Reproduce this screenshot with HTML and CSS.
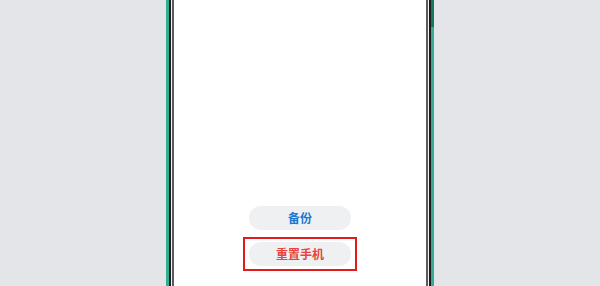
FILE: index.html
```html
<!DOCTYPE html>
<html>
<head>
<meta charset="utf-8">
<link rel="stylesheet" href="styles.css">
</head>
<body>
<div class="phone">
  <div class="bezel">
    <div class="rim">
      <div class="screen">
        <div class="actions">
          <div class="btn btn-blue">备份</div>
          <div class="mark">
            <div class="btn btn-red">重置手机</div>
          </div>
        </div>
      </div>
    </div>
  </div>
</div>
</body>
</html>
```

FILE: styles.css
```css
* {
    margin:0px;
    padding:0px;
    box-sizing:border-box;
}
html, body {
    height:100%;
}
body {
    background:#e4e5e9;
    font-family:"Noto Sans CJK SC", "Noto Sans", sans-serif;
    overflow:hidden;
}
.phone {
    position:relative;
    width:268px;
    height:100%;
    margin:0 auto;
    border-left:3px solid #2fae92;
    border-right:3px solid #2fae92;
}
.phone:after {
    content:"";
    position:absolute;
    right:-3px;
    top:0;
    width:3px;
    height:27px;
    background:#137a5f;
}
.bezel {
    height:100%;
    border-left:2px solid #1b1d1d;
    border-right:2px solid #1b1d1d;
}
.rim {
    height:100%;
    border-left:1px solid #f4f4f4;
    border-right:1px solid #f4f4f4;
    background:#5a5a5e;
    padding:0 2px;
}
.screen {
    height:100%;
    background:#ffffff;
    display:flex;
    flex-direction:column;
    justify-content:flex-end;
    align-items:center;
    padding-bottom:15px;
}
.actions {
    display:flex;
    flex-direction:column;
    align-items:center;
    gap:7px;
}
.btn {
    width:102px;
    height:24px;
    border-radius:12px;
    background:#eff0f2;
    font-size:12px;
    font-weight:700;
    line-height:24px;
    text-align:center;
}
.btn-blue {
    color:#1a78d4;
}
.btn-red {
    color:#e5453d;
}
.mark {
    width:114px;
    height:34px;
    border:2px solid #e11b1b;
    display:flex;
    align-items:center;
    justify-content:center;
}
```
